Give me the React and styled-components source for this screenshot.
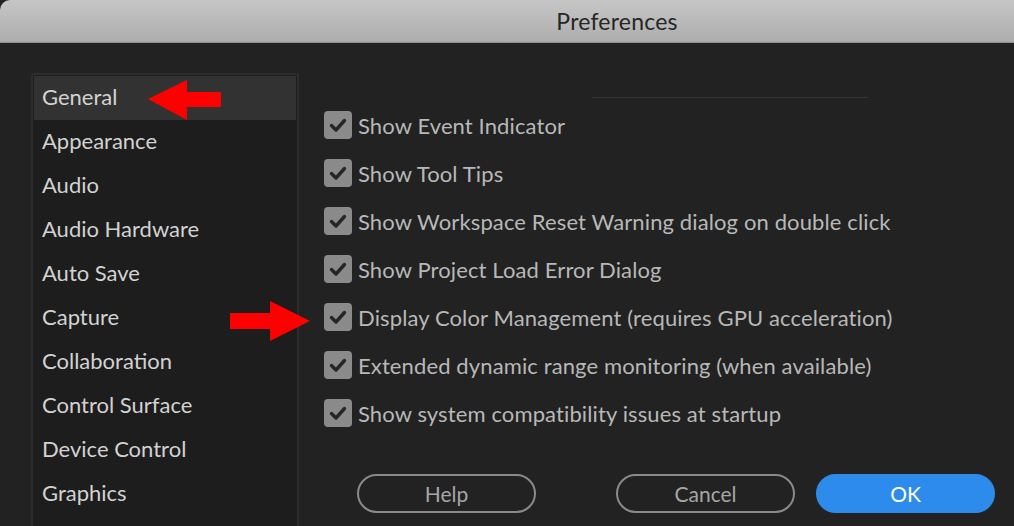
import React from 'react';
import styled, { createGlobalStyle } from 'styled-components';

const GlobalStyle = createGlobalStyle`
  html, body {
    margin: 0;
    padding: 0;
    background: #222222;
  }
  body {
    font-family: 'Lato', 'Noto Sans', sans-serif;
  }
`;

const categories = [
  'General',
  'Appearance',
  'Audio',
  'Audio Hardware',
  'Auto Save',
  'Capture',
  'Collaboration',
  'Control Surface',
  'Device Control',
  'Graphics',
];

const options = [
  'Show Event Indicator',
  'Show Tool Tips',
  'Show Workspace Reset Warning dialog on double click',
  'Show Project Load Error Dialog',
  'Display Color Management (requires GPU acceleration)',
  'Extended dynamic range monitoring (when available)',
  'Show system compatibility issues at startup',
];

function CheckIcon() {
  return (
    <svg width="28" height="28" viewBox="0 0 28 28">
      <path
        d="M7.5 14.5 L12 19 L20.5 9.5"
        fill="none"
        stroke="#262626"
        strokeWidth="3.4"
        strokeLinecap="round"
        strokeLinejoin="round"
      />
    </svg>
  );
}

function App() {
  return (
    <Window>
      <GlobalStyle />
      <TitleBar>
        <Title>Preferences</Title>
      </TitleBar>
      <Body>
        <Sidebar>
          {categories.map((name, i) => (
            <SidebarItem key={name} selected={i === 0}>
              {name}
            </SidebarItem>
          ))}
        </Sidebar>
        <Content>
          <Divider />
          <OptionList>
            {options.map(label => (
              <OptionRow key={label}>
                <CheckBox>
                  <CheckIcon />
                </CheckBox>
                <OptionLabel>{label}</OptionLabel>
              </OptionRow>
            ))}
          </OptionList>
          <ButtonRow>
            <Button>Help</Button>
            <Spacer />
            <Button>Cancel</Button>
            <Button primary>OK</Button>
          </ButtonRow>
        </Content>
      </Body>

      <Arrow style={{ left: 148, top: 80 }} width="76" height="40" viewBox="0 0 76 40">
        <polygon points="0,19 39,0 39,12 73,12 73,27 39,27 39,40" fill="#ff0000" />
      </Arrow>
      <Arrow style={{ left: 230, top: 300 }} width="82" height="42" viewBox="0 0 82 42">
        <polygon points="0,13 40,13 40,1 80,21 40,41 40,29 0,29" fill="#ff0000" />
      </Arrow>
    </Window>
  );
}

const Window = styled.div`
  position: relative;
  width: 1014px;
  height: 526px;
  overflow: hidden;
  background: #222222;
`;

const TitleBar = styled.div`
  display: flex;
  align-items: center;
  justify-content: center;
  height: 43px;
  padding-left: 220px;
  border-top-left-radius: 10px;
  border-bottom: 1px solid #8e8e8e;
  background: linear-gradient(#c6c6c6, #adadad);
  box-sizing: border-box;
`;

const Title = styled.div`
  font-family: 'Lato', 'Noto Sans', sans-serif;
  font-size: 23px;
  color: #262626;
  letter-spacing: 0.2px;
`;

const Body = styled.div`
  display: flex;
  padding-top: 30px;
`;

const Sidebar = styled.div`
  display: flex;
  flex-direction: column;
  width: 262px;
  height: 470px;
  margin-left: 31px;
  padding: 1px;
  border: 2px solid #2d2d2d;
  border-radius: 3px;
  background: #1d1d1d;
  flex-shrink: 0;
`;

const SidebarItem = styled.div`
  flex-shrink: 0;
  height: 44px;
  line-height: 42px;
  padding-left: 8px;
  font-size: 22px;
  color: #d2d2d2;
  background: ${({ selected }) => (selected ? '#323232' : 'transparent')};
  white-space: nowrap;
`;

const Content = styled.div`
  display: flex;
  flex-direction: column;
  flex: 1;
  padding-left: 25px;
`;

const Divider = styled.div`
  width: 276px;
  height: 1px;
  margin: 24px 0 0 268px;
  background: #353535;
`;

const OptionList = styled.div`
  display: flex;
  flex-direction: column;
  gap: 20px;
  margin-top: 13px;
`;

const OptionRow = styled.div`
  display: flex;
  align-items: center;
  height: 28px;
`;

const CheckBox = styled.div`
  display: flex;
  width: 28px;
  height: 28px;
  border-radius: 4px;
  background: #8a8a8a;
  flex-shrink: 0;
`;

const OptionLabel = styled.div`
  margin-left: 6px;
  font-size: 22px;
  letter-spacing: 0.12px;
  color: #b8b8b8;
  white-space: nowrap;
`;

const ButtonRow = styled.div`
  display: flex;
  align-items: center;
  gap: 21px;
  margin-top: 47px;
  padding-left: 33px;
`;

const Spacer = styled.div`
  width: 38px;
`;

const Button = styled.button`
  width: 179px;
  height: 39px;
  border-radius: 20px;
  border: 2px solid ${({ primary }) => (primary ? '#2d8ceb' : '#8a8a8a')};
  background: ${({ primary }) => (primary ? '#2d8ceb' : 'transparent')};
  color: ${({ primary }) => (primary ? '#ffffff' : '#a6a6a6')};
  font-family: 'Lato', 'Noto Sans', sans-serif;
  font-size: 21px;
  padding: 0;
  cursor: pointer;
`;

const Arrow = styled.svg`
  position: absolute;
`;

export default App;
